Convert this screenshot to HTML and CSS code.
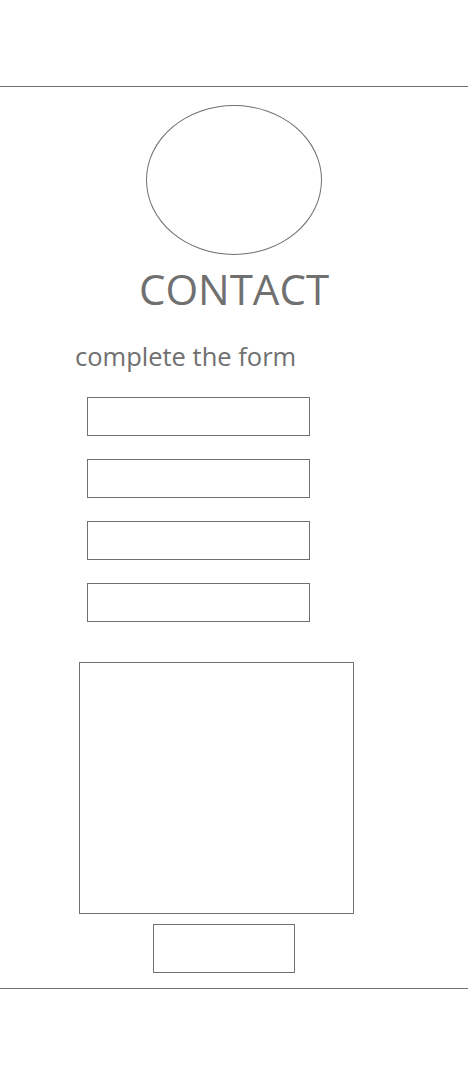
FILE: index.html
```html
<!DOCTYPE html>
<html lang="en">
<head>
<meta charset="utf-8">
<title>Contact</title>
<link rel="stylesheet" href="styles.css">
</head>
<body>
<header class="top-bar"></header>
<main class="page">
  <div class="avatar"></div>
  <h1 class="title">CONTACT</h1>
  <p class="subtitle">complete the form</p>
  <form class="contact-form">
    <input class="field" type="text">
    <input class="field" type="text">
    <input class="field" type="text">
    <input class="field" type="text">
    <textarea class="message"></textarea>
    <button class="submit" type="submit"></button>
  </form>
</main>
<footer class="bottom-bar"></footer>
</body>
</html>
```

FILE: styles.css
```css
html, body {
  margin: 0;
  padding: 0;
  background: #ffffff;
}
body {
  font-family: "Open Sans", "Noto Sans", sans-serif;
  color: #707070;
}
.top-bar {
  height: 86px;
  border-bottom: 1px solid #707070;
}
.page {
  display: flex;
  flex-direction: column;
  padding-top: 18px;
}
.avatar {
  align-self: center;
  width: 174px;
  height: 148px;
  border: 1px solid #707070;
  border-radius: 50%;
}
.title {
  margin: 8px 0 0 0;
  text-align: center;
  font-weight: 400;
  font-size: 42px;
  line-height: 52px;
  color: #707070;
}
.subtitle {
  margin: 25px 0 0 75px;
  font-size: 25.5px;
  line-height: 32px;
  color: #707070;
}
.contact-form {
  display: flex;
  flex-direction: column;
  align-items: flex-start;
  padding-top: 25px;
}
.field {
  box-sizing: border-box;
  width: 223px;
  height: 39px;
  margin: 0 0 23px 87px;
  border: 1px solid #707070;
  background: #fff;
  padding: 0;
}
.message {
  box-sizing: border-box;
  width: 275px;
  height: 252px;
  margin: 17px 0 0 79px;
  border: 1px solid #707070;
  background: #fff;
  resize: none;
  padding: 0;
}
.submit {
  box-sizing: border-box;
  width: 142px;
  height: 49px;
  margin: 10px 0 0 153px;
  border: 1px solid #707070;
  background: #fff;
  padding: 0;
}
.bottom-bar {
  margin-top: 15px;
  border-top: 1px solid #707070;
}
```
